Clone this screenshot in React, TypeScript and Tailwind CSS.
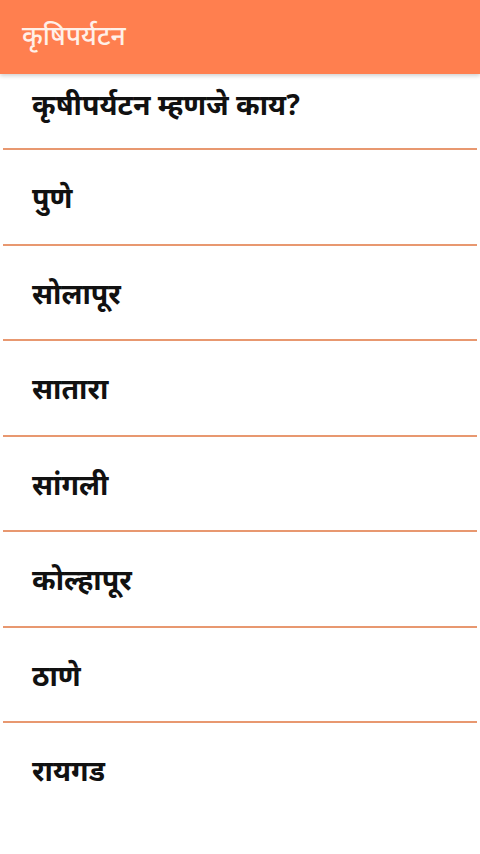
export default function App() {
  const items = ["पुणे", "सोलापूर", "सातारा", "सांगली", "कोल्हापूर", "ठाणे", "रायगड"];
  const font = { fontFamily: '"Noto Sans", "Noto Sans Devanagari", sans-serif' };
  return (
    <div className="w-[480px] h-[854px] bg-white overflow-hidden flex flex-col" style={font}>
      <div className="h-[74px] shrink-0 bg-[#ff7f4f] flex items-center px-[22px] pb-[2px] shadow-[0_2px_4px_rgba(0,0,0,0.18)] relative z-10">
        <span className="text-[26.5px] font-medium text-[#fff0e8]">कृषिपर्यटन</span>
      </div>
      <div className="flex flex-col">
        <div className="h-[74px] flex items-start pt-[9px] px-[32px]">
          <span className="text-[28.5px] font-bold text-[#111]">कृषीपर्यटन म्हणजे काय?</span>
        </div>
        {items.map((t) => (
          <div key={t} className="flex flex-col">
            <div className="mx-[3px] h-[2px] bg-[#e89870]" />
            <div className="h-[93.5px] flex items-center px-[32px] pt-[2px]">
              <span className="text-[28.5px] font-bold text-[#111]">{t}</span>
            </div>
          </div>
        ))}
      </div>
    </div>
  );
}
